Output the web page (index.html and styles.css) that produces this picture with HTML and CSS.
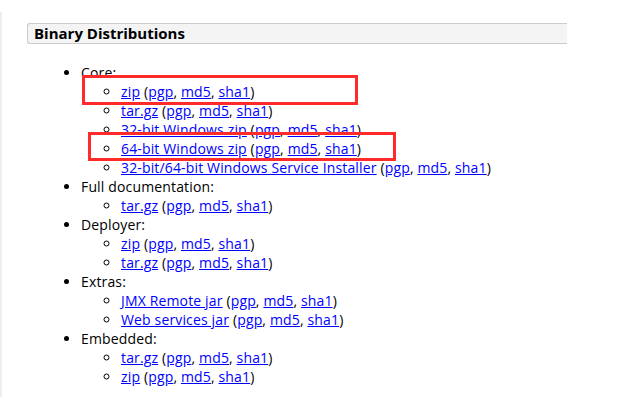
FILE: index.html
```html
<!DOCTYPE html>
<html lang="en">
<head>
  <meta charset="UTF-8" />
  <title>Binary Distributions</title>
  <link rel="stylesheet" href="styles.css">
</head>
<body>

<div class="page">
  <h3 class="section-head">Binary Distributions</h3>

  <ul class="downloads">
    <li>Core:
      <ul>
        <li><a href="#">zip</a> (<a href="#">pgp</a>, <a href="#">md5</a>, <a href="#">sha1</a>)</li>
        <li><a href="#">tar.gz</a> (<a href="#">pgp</a>, <a href="#">md5</a>, <a href="#">sha1</a>)</li>
        <li><a href="#">32-bit Windows zip</a> (<a href="#">pgp</a>, <a href="#">md5</a>, <a href="#">sha1</a>)</li>
        <li><a href="#">64-bit Windows zip</a> (<a href="#">pgp</a>, <a href="#">md5</a>, <a href="#">sha1</a>)</li>
        <li><a href="#">32-bit/64-bit Windows Service Installer</a> (<a href="#">pgp</a>, <a href="#">md5</a>, <a href="#">sha1</a>)</li>
      </ul>
    </li>
    <li>Full documentation:
      <ul>
        <li><a href="#">tar.gz</a> (<a href="#">pgp</a>, <a href="#">md5</a>, <a href="#">sha1</a>)</li>
      </ul>
    </li>
    <li>Deployer:
      <ul>
        <li><a href="#">zip</a> (<a href="#">pgp</a>, <a href="#">md5</a>, <a href="#">sha1</a>)</li>
        <li><a href="#">tar.gz</a> (<a href="#">pgp</a>, <a href="#">md5</a>, <a href="#">sha1</a>)</li>
      </ul>
    </li>
    <li>Extras:
      <ul>
        <li><a href="#">JMX Remote jar</a> (<a href="#">pgp</a>, <a href="#">md5</a>, <a href="#">sha1</a>)</li>
        <li><a href="#">Web services jar</a> (<a href="#">pgp</a>, <a href="#">md5</a>, <a href="#">sha1</a>)</li>
      </ul>
    </li>
    <li>Embedded:
      <ul>
        <li><a href="#">tar.gz</a> (<a href="#">pgp</a>, <a href="#">md5</a>, <a href="#">sha1</a>)</li>
        <li><a href="#">zip</a> (<a href="#">pgp</a>, <a href="#">md5</a>, <a href="#">sha1</a>)</li>
      </ul>
    </li>
  </ul>
</div>

<!-- red annotation boxes -->
<div class="mark mark-zip"></div>
<div class="mark mark-win64"></div>

</body>
</html>
```

FILE: styles.css
```css
body {
  margin: 0;
  font-family: 'Open Sans', sans-serif;
  font-size: 14px;
  letter-spacing: 0.15px;
  color: #000;
  background: #fff;
}
.page {
  margin-top: 12px;
  height: 385px;
  box-sizing: border-box;
  border-left: 2px solid #eee;
  padding: 11px 0 0 25px;
}
.section-head {
  margin: 0;
  width: 540px;
  height: 21px;
  box-sizing: border-box;
  background: #f4f4f4;
  border: 1px solid #ccc;
  border-right: none;
  border-radius: 3px 0 0 3px;
  padding: 0 0 0 6px;
  font-size: 15px;
  font-weight: bold;
  letter-spacing: 0;
  line-height: 19px;
}
.downloads {
  margin: 19px 0 0 0;
  padding-left: 54px;
  line-height: 19px;
}
.downloads ul {
  margin: 0;
  padding-left: 40px;
  list-style-type: circle;
}
a {
  color: #00f;
}
.mark {
  position: absolute;
  border: 3px solid #ff2b2b;
  box-sizing: border-box;
}
.mark-zip { left: 82px; top: 75px; width: 276px; height: 30px; }
.mark-win64 { left: 88px; top: 132px; width: 308px; height: 29px; }
```
